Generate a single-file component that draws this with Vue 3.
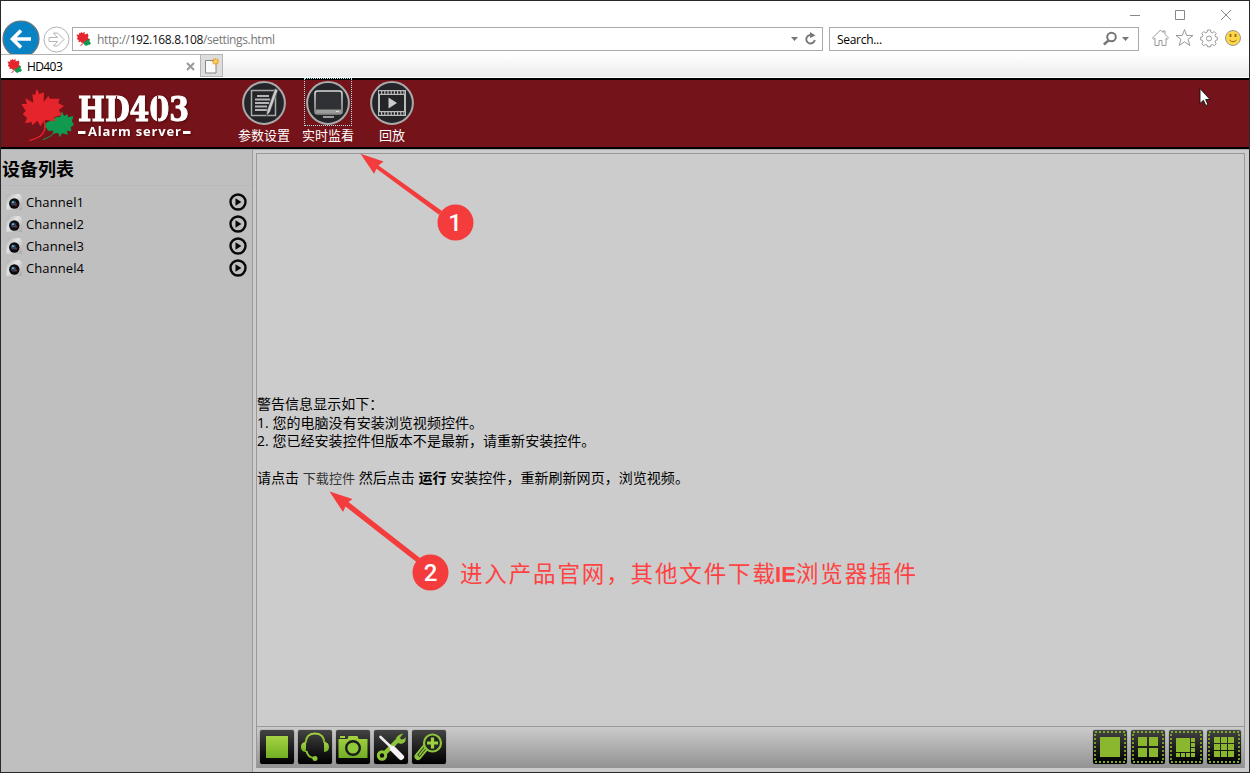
<script setup>
const channels = ['Channel1', 'Channel2', 'Channel3', 'Channel4']

const cells = (n, size, step, start) => {
  const out = []
  for (let r = 0; r < n; r++) {
    for (let c = 0; c < n; c++) out.push([start + c * step, start + r * step, size, size])
  }
  return out
}
const layouts = [
  { id: 'one', rects: [[7, 7, 20, 20]] },
  { id: 'four', rects: cells(2, 9, 11, 7) },
  {
    id: 'eight',
    rects: [
      [7, 8, 14, 14], [22, 8, 4, 4], [22, 13, 4, 4], [22, 18, 4, 4],
      [7, 23, 4, 4], [12, 23, 4, 4], [17, 23, 4, 4], [22, 23, 4, 4],
    ],
  },
  { id: 'nine', rects: cells(3, 6, 7, 7) },
]
</script>

<template>
  <div class="window">
    <svg class="defs" width="0" height="0">
      <defs>
        <symbol id="leaf" viewBox="60 30 170 175">
          <path fill="#109a50" d="M186 106l6 14 10-6 2 10 16-4-4 16 6 10-10 8 2 12-14-2 4 12-18-4-6 12-6-14-16 4 2-10-16 0-6-10-6 2 4-14 12-6 20-12 12-2z" />
          <path fill="none" stroke="#109a50" stroke-width="3" d="M170 160q-15 24-42 31" />
          <path fill="#e6242b" d="M110 38l8 16 14-5-1 29 14-18 5 8 29 0-4 14 17 8-16 12 10 14-24 8 4 12-27-4-7 2-11 17-9-17-15 14-2-10-20 4 6-16-13-12 9-9-13-21 16 0-4-17 24 13-3-26 8 3z" />
          <path fill="none" stroke="#e6242b" stroke-width="4" d="M132 134q10 31-12 47-14 9-32 13" />
        </symbol>
        <symbol id="favicon" viewBox="0 0 16 16">
          <path fill="#109a50" d="M10 7.500l4 .5-.5 2.500 1.500 1.500-1.500 2-1.500-.3-1.500 1.300-2-1-1.500-2.500z" />
          <path fill="#e6242b" d="M5 .5l1.500 1.700L8.500.8l.2 2.700 3-1 .8 2.500-.8 1.500 1.500 1.800-2.500.8-.3 1.400-2.600-.2L6 12.500l-1.200-2-2.300.7.2-2.200L.8 8l.9-1.700L.5 3.500l2.500.2.3-2 1.500.6z" />
          <path fill="none" stroke="#e6242b" d="M7 9q1.500 4-2.500 5.500" />
        </symbol>
        <linearGradient id="green" x1="0" y1="0" x2="0" y2="1">
          <stop offset="0" stop-color="#a6d343" />
          <stop offset="1" stop-color="#72ae24" />
        </linearGradient>
        <linearGradient id="steel" x1="0" y1="0" x2="0" y2="1">
          <stop offset="0" stop-color="#d8d8d8" />
          <stop offset="1" stop-color="#8f8f8f" />
        </linearGradient>
        <linearGradient id="shell" x1="0" y1="0" x2="1" y2="1">
          <stop offset="0" stop-color="#a9a9a9" />
          <stop offset=".4" stop-color="#e4e4e4" />
          <stop offset="1" stop-color="#a8a8a8" />
        </linearGradient>
      </defs>
    </svg>

    <div class="chrome">
      <div class="nav">
        <svg class="back" width="38" height="38" viewBox="0 0 38 38">
          <circle cx="19" cy="19" r="18" fill="#0983c4" stroke="#6d7378" stroke-width="1.2" />
          <path d="M29 19H11M19 10.500l-8.500 8.500 8.500 8.500" fill="none" stroke="#fff" stroke-width="3.600" />
        </svg>
        <svg class="fwd" width="27" height="27" viewBox="0 0 27 27">
          <circle cx="13.500" cy="13.500" r="12.500" fill="#fff" stroke="#b2b2b2" />
          <path d="M6 11.500h8.500l-4-4.500h4l6.500 6.500-6.500 6.500h-4l4-4.500H6z" fill="#fff" stroke="#b2b2b2" />
        </svg>
        <div class="field address">
          <svg class="mini" width="16" height="16"><use href="#favicon" width="16" height="16" /></svg>
          <span class="url">http://<b>192.168.8.108</b>/settings.html</span>
          <svg class="addr-icons" width="28" height="16" viewBox="0 0 28 16">
            <path d="M0 6h7l-3.500 4z" fill="#777" />
            <path d="M22 4.700a4.300 4.300 0 1 0 1.800 4.300" fill="none" stroke="#777" stroke-width="1.900" />
            <path d="M19 1l5.500 3.500-5.500 2.500z" fill="#777" />
          </svg>
        </div>
        <div class="field search">
          <span>Search...</span>
          <svg width="26" height="16" viewBox="0 0 26 16">
            <circle cx="8.500" cy="6" r="4.300" fill="none" stroke="#777" stroke-width="2" />
            <path d="M5.500 9.500L.8 13.500" stroke="#777" stroke-width="2.400" />
            <path d="M19 6h7l-3.500 4z" fill="#777" />
          </svg>
        </div>
        <svg class="tools" width="92" height="20" viewBox="0 0 92 20" fill="none" stroke="#999">
          <path d="M1.500 10L9.500 2l2.500 2.500V3h2v3.500l3.500 3.500-1.300 1.300-1.200-1V17.500h-4v-5h-3v5h-4v-7.200l-1.200 1z" />
          <path d="M33.500 1.500l2.200 6h6.300l-5 3.900 1.900 6.100-5.400-3.700-5.400 3.700 1.900-6.100-5-3.900h6.300z" />
          <path d="M56.500 2h3l.4 2.200 1.500.6 1.900-1.200 1.900 1.900-1.200 1.900.6 1.500 1.700.3v2.800l-1.700.4-.6 1.500 1.200 1.900-1.900 1.900-1.900-1.200-1.500.6-.4 1.700h-3l-.4-1.700-1.500-.6-1.900 1.200-1.900-1.900 1.200-1.900-.6-1.500-1.700-.4V9.200l1.700-.3.6-1.500-1.200-1.900 1.900-1.900 1.900 1.200 1.500-.6z" />
          <circle cx="58" cy="10.500" r="2.500" />
          <circle cx="82" cy="10" r="7.500" fill="#ffd64a" />
          <path d="M79.500 6v3M84.500 6v3" stroke="#8d6b14" stroke-width="1.800" />
          <path d="M78.500 12q3.500 3.500 7 0" stroke="#8d6b14" />
        </svg>
        <svg class="winbtns" width="104" height="14" viewBox="0 0 104 14" fill="none" stroke="#888">
          <path d="M1 7.500h10M46.500 2.500h9v9h-9zM92 2l10 10M102 2L92 12" />
        </svg>
      </div>
      <div class="tabs">
        <div class="tab">
          <svg width="16" height="16"><use href="#favicon" width="16" height="16" /></svg>
          <span>HD403</span>
          <svg class="x" width="9" height="9" viewBox="0 0 9 9"><path d="M1 1l7 7M8 1L1 8" stroke="#999" stroke-width="2" /></svg>
        </div>
        <div class="newtab">
          <svg width="22" height="22" viewBox="0 0 22 22">
            <path d="M4.500 5.500h10.500v12.500H4.500z" fill="#fafafa" stroke="#888" />
            <path d="M14.500 3v7M11 6.500h7M12 4l5 5M17 4l-5 5" stroke="#eaa62d" stroke-width="1.300" />
            <circle cx="14.500" cy="6.500" r="1.800" fill="#ffcf56" />
          </svg>
        </div>
      </div>
    </div>

    <header>
      <svg class="logo" width="200" height="67" viewBox="1 80 200 67">
        <use href="#leaf" x="20" y="86" width="56.700" height="58.300" />
        <g class="shadow">
          <text x="78" y="121" class="brand" textLength="111" lengthAdjust="spacingAndGlyphs">HD403</text>
          <text x="88" y="136" class="sub" textLength="93">Alarm server</text>
          <path d="M78 132.500h7.500M183 132.500h7.500" stroke="#fff" stroke-width="3" />
        </g>
        <path d="M116.500 96v26M157.500 96v26" stroke="#741319" stroke-width="1.200" />
      </svg>
      <nav>
        <a>
          <svg width="44" height="44" viewBox="0 0 44 44">
            <circle cx="22" cy="22" r="20.900" fill="#242528" stroke="#aaa" stroke-width="2" />
            <path d="M9.500 9.500h24v25h-24z" fill="none" stroke="#aaa" stroke-width="1.500" />
            <path d="M15 15h12M13 18.500h15M13 22h14M13 25.500h12M13 29h12" stroke="#b4b4b4" stroke-width="2" />
            <path d="M33 7.500l3 1.500-8 22-3.500 4 .5-5.500z" fill="#ccc" stroke="#444" stroke-width=".7" />
          </svg>
          <span>参数设置</span>
        </a>
        <a class="focus">
          <svg width="44" height="44" viewBox="0 0 44 44">
            <circle cx="22" cy="22" r="20.900" fill="#242528" stroke="#aaa" stroke-width="2" />
            <rect x="9" y="10" width="27" height="23" rx="2.500" fill="#303134" stroke="url(#steel)" stroke-width="1.600" />
            <path d="M10 28.500h25v3q0 1-1 1H11q-1 0-1-1zM17 35h11v2H17z" fill="#9c9c9c" />
            <path d="M30 30.500h3" stroke="#ddd" />
          </svg>
          <span>实时监看</span>
        </a>
        <a>
          <svg width="44" height="44" viewBox="0 0 44 44">
            <circle cx="22" cy="22" r="20.900" fill="#242528" stroke="#aaa" stroke-width="2" />
            <path d="M8 9h28v26H8z" fill="#bbb" />
            <path d="M10 14h24v16H10z" fill="#242528" />
            <path d="M9 11.500h26M9 32.500h26" stroke="#242528" stroke-width="2.400" stroke-dasharray="2 1.200" />
            <path d="M18.500 16.500l8.500 5.500-8.500 5.500z" fill="#ccc" />
          </svg>
          <span>回放</span>
        </a>
      </nav>
    </header>

    <div class="body">
      <aside>
        <h2>设备列表</h2>
        <ul>
          <li v-for="c in channels" :key="c">
            <svg width="16" height="16" viewBox="0 0 16 16">
              <path d="M2.500 0h11L16 2.500V16H.5V2.500z" fill="url(#shell)" />
              <circle cx="8.300" cy="9.500" r="5.200" fill="#0a0a0c" />
              <circle cx="7.500" cy="9" r="2.600" fill="#25485e" />
              <circle cx="9.800" cy="10.500" r="1.300" fill="#7d2b33" />
              <circle cx="7" cy="8.200" r=".9" fill="#9ac4da" />
            </svg>
            <span>{{ c }}</span>
            <svg class="play" width="18" height="18" viewBox="0 0 18 18">
              <circle cx="9" cy="9" r="7.500" fill="none" stroke="#080808" stroke-width="2.400" />
              <path d="M6.500 5.300L12.400 9l-5.900 3.700z" fill="#080808" />
            </svg>
          </li>
        </ul>
      </aside>
      <main>
        <section class="view">
          <div class="message">
            <p>警告信息显示如下：</p>
            <p>1. 您的电脑没有安装浏览视频控件。</p>
            <p>2. 您已经安装控件但版本不是最新，请重新安装控件。</p>
            <p class="last">请点击 <a>下载控件</a> 然后点击 <b>运行</b> 安装控件，重新刷新网页，浏览视频。</p>
          </div>
        </section>
        <footer>
          <div class="group">
            <svg class="btn" viewBox="0 0 34 34"><rect x="6" y="6" width="22" height="22" fill="url(#green)" /></svg>
            <svg class="btn" viewBox="0 0 34 34" fill="none" stroke="url(#green)">
              <path d="M7.500 13C8 6 12 3.500 17 3.500S26 6 26.500 13" stroke-width="2.200" />
              <path d="M8 12v10c-4 0-5-3-5-5s1-5 5-5zM26 12v10c4 0 5-3 5-5s-1-5-5-5z" fill="url(#green)" stroke="none" />
              <path d="M8.500 21q1 6 7 7" stroke-width="1.800" /><circle cx="17" cy="28.500" r="2.500" fill="#8dc53a" stroke="none" />
            </svg>
            <svg class="btn" viewBox="0 0 34 34">
              <path d="M2.500 9h9l1-3h9l1 3h9v19h-29zM4 6h5v2H4z" fill="url(#green)" />
              <circle cx="17" cy="18" r="6.800" fill="#8fc838" stroke="#1d1d1d" stroke-width="2.400" />
            </svg>
            <svg class="btn" viewBox="0 0 34 34">
              <path d="M11 23L24 10" stroke="#8dc53a" stroke-width="4.500" />
              <circle cx="8" cy="25.500" r="3.700" fill="none" stroke="#8dc53a" stroke-width="3" />
              <path d="M29.500 3.500L26 7.500l1 2 3-.5 1.500-2q1 5-3 6.500-5 1-6.500-3.500-.5-5 7.500-6.500z" fill="#8dc53a" />
              <path d="M6.500 7L18 18" stroke="#eee" stroke-width="2.600" stroke-linecap="round" />
              <path d="M19 19l8 8" stroke="#f5f1f5" stroke-width="6" stroke-linecap="round" />
            </svg>
            <svg class="btn" viewBox="0 0 34 34">
              <path d="M13 18L6 26.500" stroke="#8dc53a" stroke-width="7" stroke-linecap="round" />
              <path d="M13 18L6.500 26" stroke="#252525" stroke-width="3" />
              <path d="M13 18L7 25.500" stroke="#8dc53a" stroke-width="1.600" />
              <circle cx="20.500" cy="13" r="8.500" fill="#252525" stroke="#8dc53a" stroke-width="2.200" />
              <path d="M20.500 7.500v11M15 13h11" stroke="#9bd33c" stroke-width="3.200" />
            </svg>
          </div>
          <div class="group">
            <svg v-for="l in layouts" :key="l.id" class="btn" viewBox="0 0 34 34">
              <rect x="2" y="2" width="30" height="30" fill="none" stroke="#7dac2b" stroke-width="1.800" stroke-dasharray="2 2" />
              <rect v-for="(r, i) in l.rects" :key="i" :x="r[0]" :y="r[1]" :width="r[2]" :height="r[3]" fill="#8bb72e" />
            </svg>
          </div>
        </footer>
      </main>
    </div>

    <svg class="overlay" width="1250" height="773" viewBox="0 0 1250 773">
      <g fill="#f43c3c">
        <path d="M442 211L378.500 165.500l5-4-23-7.800 13.500 20 2.500-5 62.500 46z" />
        <circle cx="455.500" cy="222.500" r="18" />
        <path d="M420 558L348.500 502l4-3-23-7.500 13.500 20.500 2.500-5.500 71 55.500z" />
        <circle cx="430.500" cy="572.500" r="18" />
      </g>
      <text x="455" y="231" class="num">1</text>
      <text x="430.500" y="581" class="num">2</text>
      <text x="460" y="582" class="note" textLength="315">进入产品官网，其他文件下载</text>
      <text x="775" y="582" class="note ie" textLength="21">IE</text>
      <text x="796" y="582" class="note" textLength="120">浏览器插件</text>
      <path d="M1200 88.500v15l3.400-3.200 2.400 5.200 2.200-1-2.400-5h4.400z" fill="#fff" stroke="#111" stroke-width=".9" />
    </svg>
  </div>
</template>

<style>
body { margin: 0; overflow: hidden; }
</style>

<style scoped>
* { box-sizing: border-box; }
.window {
  position: relative; width: 1250px; height: 773px; border: 1px solid #2b282a;
  display: flex; flex-direction: column; background: #fff; overflow: hidden;
  font-family: "Open Sans", "Noto Sans CJK SC", sans-serif; color: #000;
}
.defs { position: absolute; }
svg { display: block; flex: none; }
.chrome { height: 77px; background: #fff; }
.nav { position: relative; height: 53px; display: flex; align-items: flex-start; padding: 19px 0 0 1px; }
.fwd { margin: 6px 0 0 3px; }
.field { height: 24px; margin-top: 7px; border: 1px solid #aaa; display: flex; align-items: center; background: #fff; font-size: 12px; }
.address { width: 751px; margin-left: 2px; padding: 0 3px 0 3px; }
.mini { margin-right: 5px; }
.url { color: #777; letter-spacing: -.37px; }
.url b { color: #111; font-weight: 400; }
.addr-icons { margin-left: auto; }
.search { width: 310px; margin-left: 6px; padding: 0 9px 0 7px; justify-content: space-between; letter-spacing: -.3px; }
.tools { margin: 8px 0 0 12px; }
.winbtns { position: absolute; right: 16px; top: 7px; }
.tabs { position: relative; height: 24px; display: flex; background: linear-gradient(#fff, #ececec); border-bottom: 1px solid #fff; }
.tab { width: 199px; border-top: 1px solid #b5b5b5; background: #fff; display: flex; align-items: center; padding: 0 5px 0 6px; font-size: 12px; }
.tab span { margin-left: 4px; letter-spacing: -.6px; }
.x { margin-left: auto; }
.newtab { width: 23px; border: 1px solid #b5b5b5; background: #ddd; }
header { height: 71px; border: solid #000; border-width: 2px 0; background: #741319; display: flex; }
.logo { overflow: visible; }
.brand { font: 700 33px "DejaVu Serif", serif; fill: #fff; stroke: #fff; stroke-width: 1; }
.sub { font: 700 13px "Open Sans", sans-serif; fill: #fff; }
.shadow { filter: drop-shadow(1px 1px 1px #3008); }
nav { display: flex; margin-left: 31px; }
nav a { width: 64px; display: flex; flex-direction: column; align-items: center; padding-top: 1px; color: #fff; font: 13px/20px "Open Sans", "Noto Sans CJK SC", sans-serif; position: relative; }
nav span { white-space: nowrap; }
nav .focus::before { content: ""; position: absolute; left: 8px; top: -2px; width: 46px; height: 46px; border: 1px dotted #a8e3e6; }
.body { flex: 1; display: flex; background: #ccc; border-top: 1px solid #aaa; min-height: 0; }
aside { width: 252px; background: #bfbfbf; border-right: 1px solid #999; }
h2 { margin: 0; height: 36px; padding-left: 1px; font: 700 18px/36px "Noto Sans CJK SC", sans-serif; border-bottom: 1px solid #bababa; }
ul { list-style: none; margin: 0; padding: 5px 5px 0 5px; }
li { height: 22px; display: flex; align-items: center; font: 13px/20px "Open Sans", sans-serif; letter-spacing: .1px; }
li span { margin-left: 4px; }
.play { margin-left: auto; }
main { flex: 1; margin: 3px 4px 4px 3px; border: 1px solid #999; border-bottom: 0; display: flex; flex-direction: column; min-width: 0; }
.view { flex: 1; border-bottom: 1px solid #999; display: flex; align-items: center; }
.message { font: 14px/18.500px "Open Sans", "Noto Sans CJK SC", sans-serif; white-space: nowrap; padding-top: 3px; }
.message p { margin: 0; height: 18.500px; letter-spacing: .04px; }
.message .last { margin-top: 18.500px; }
.message a { color: #333; font-size: 13px; }
footer { height: 41px; padding: 3px 3px 0; display: flex; align-items: flex-start; justify-content: space-between; background: linear-gradient(#cbcbcb, #929292); }
.group { display: flex; gap: 4px; }
.btn { width: 34px; height: 34px; border-radius: 2px; background: linear-gradient(#444, #151515 65%, #000); box-shadow: 0 0 1px #333; }
.overlay { position: absolute; left: -1px; top: -1px; pointer-events: none; }
.num { font: 500 24px Roboto, sans-serif; fill: #fff; text-anchor: middle; }
.note { font: 400 22.500px "Noto Sans CJK SC", sans-serif; fill: #ff4242; }
.ie { font: 700 22px "Liberation Sans", sans-serif; }
</style>
